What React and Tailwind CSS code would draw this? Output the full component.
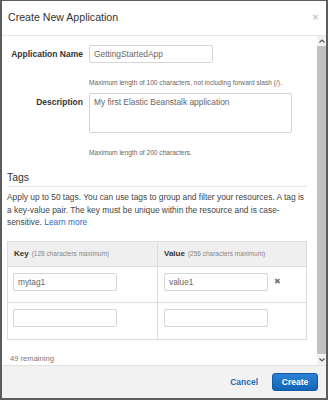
const font = "font-['Liberation_Sans',Arial,sans-serif]";

function Field({ label, children, help }) {
  return (
    <div className="flex">
      <div className="w-[87px] shrink-0 pr-[6px] text-right text-[8.5px] font-bold text-[#333] leading-[18px]">
        {label}
      </div>
      <div className="flex flex-col">
        {children}
        <div className="mt-[15px] text-[6.6px] leading-[9px] text-[#666]">{help}</div>
      </div>
    </div>
  );
}

function TagInput({ value }) {
  return (
    <div className="h-[18px] w-[104px] rounded-[2px] border border-[#d5d5d5] bg-white pl-[4px] text-[8.3px] leading-[16px] text-[#666]">
      {value}
    </div>
  );
}

export default function App() {
  return (
    <div className={`${font} flex h-[400px] w-[328px] flex-col overflow-hidden border-x-2 border-b-2 border-t border-[#5c5c5c] bg-white`}>
      <header className="flex h-[35px] shrink-0 items-center justify-between border-b border-[#e6e6e6] pl-[6px] pr-[7px]">
        <h1 className="text-[10.6px] text-[#333]">Create New Application</h1>
        <span className="text-[8px] font-bold text-[#c4c4c4]">✕</span>
      </header>

      <div className="flex min-h-0 flex-1">
        <div className="flex-1 overflow-hidden pt-[9px]">
          <div className="flex flex-col gap-[6px]">
            <Field label="Application Name" help="Maximum length of 100 characters, not including forward slash (/).">
              <div className="h-[18px] w-[124px] rounded-[2px] border border-[#d5d5d5] pl-[4px] text-[8.4px] leading-[16px] text-[#666]">
                GettingStartedApp
              </div>
            </Field>
            <Field label="Description" help="Maximum length of 200 characters.">
              <div className="h-[40px] w-[203px] rounded-[2px] border border-[#d5d5d5] pl-[4px] pt-[3px] text-[8.4px] leading-[10px] text-[#666]">
                My first Elastic Beanstalk application
              </div>
            </Field>
          </div>

          <div className="mt-[14px] pl-[5px] pr-[10px]">
            <h2 className="border-b border-[#e6e6e6] pb-[2px] text-[10.4px] leading-[13px] text-[#333]">Tags</h2>
            <p className="mt-[4px] text-[8.4px] leading-[12.5px] text-[#444]">
              Apply up to 50 tags. You can use tags to group and filter your resources. A tag is a key-value pair. The key must be unique within the resource and is case-sensitive.{" "}
              <span className="text-[#1e6bb8]">Learn more</span>
            </p>

            <div className="mt-[12px] border border-[#dcdcdc]">
              <div className="grid h-[25px] grid-cols-[150px_1fr] border-b border-[#dcdcdc] bg-[#efefef]">
                <div className="flex items-center border-r border-[#dcdcdc] pl-[6px]">
                  <span className="text-[8px] font-bold text-[#333]">Key</span>
                  <span className="ml-[3px] text-[6.5px] text-[#888]">(128 characters maximum)</span>
                </div>
                <div className="flex items-center pl-[6px]">
                  <span className="text-[8px] font-bold text-[#333]">Value</span>
                  <span className="ml-[3px] text-[6.5px] text-[#888]">(256 characters maximum)</span>
                </div>
              </div>
              <div className="grid h-[36px] grid-cols-[150px_1fr] border-b border-[#dcdcdc]">
                <div className="border-r border-[#dcdcdc] pl-[5px] pt-[6px]">
                  <TagInput value="mytag1" />
                </div>
                <div className="flex items-start pl-[6px] pt-[6px]">
                  <TagInput value="value1" />
                  <span className="ml-[6px] mt-[4px] font-['DejaVu_Sans',sans-serif] text-[8px] leading-[10px] text-[#777]">✖</span>
                </div>
              </div>
              <div className="grid h-[36px] grid-cols-[150px_1fr]">
                <div className="border-r border-[#dcdcdc] pl-[5px] pt-[6px]">
                  <TagInput value="" />
                </div>
                <div className="pl-[6px] pt-[6px]">
                  <TagInput value="" />
                </div>
              </div>
            </div>

            <div className="mt-[13px] pl-[3px] text-[7.6px] text-[#777]">49 remaining</div>
          </div>
        </div>

        <div className="flex w-[9px] shrink-0 flex-col bg-[#f1f1f1]">
          <div className="flex h-[10px] items-center justify-center">
            <svg width="6" height="4" viewBox="0 0 6 4"><path d="M0.5 3.5 L3 1 L5.5 3.5" fill="none" stroke="#555" strokeWidth="1.2" /></svg>
          </div>
          <div className="flex-1 bg-[#c1c1c1]" />
          <div className="flex h-[11px] items-center justify-center">
            <svg width="6" height="4" viewBox="0 0 6 4"><path d="M0.5 0.5 L3 3 L5.5 0.5" fill="none" stroke="#555" strokeWidth="1.2" /></svg>
          </div>
        </div>
      </div>

      <footer className="flex h-[33px] shrink-0 items-center justify-end gap-[14px] border-t border-[#e2e2e2] bg-[#f2f2f2] pr-[8px]">
        <span className="text-[8.5px] font-bold text-[#1e6bb8]">Cancel</span>
        <button className="h-[18px] w-[46px] rounded-[3px] border border-[#0f5aa6] bg-gradient-to-b from-[#2b82d6] to-[#1464b6] text-[8.5px] font-bold text-white">
          Create
        </button>
      </footer>
    </div>
  );
}
